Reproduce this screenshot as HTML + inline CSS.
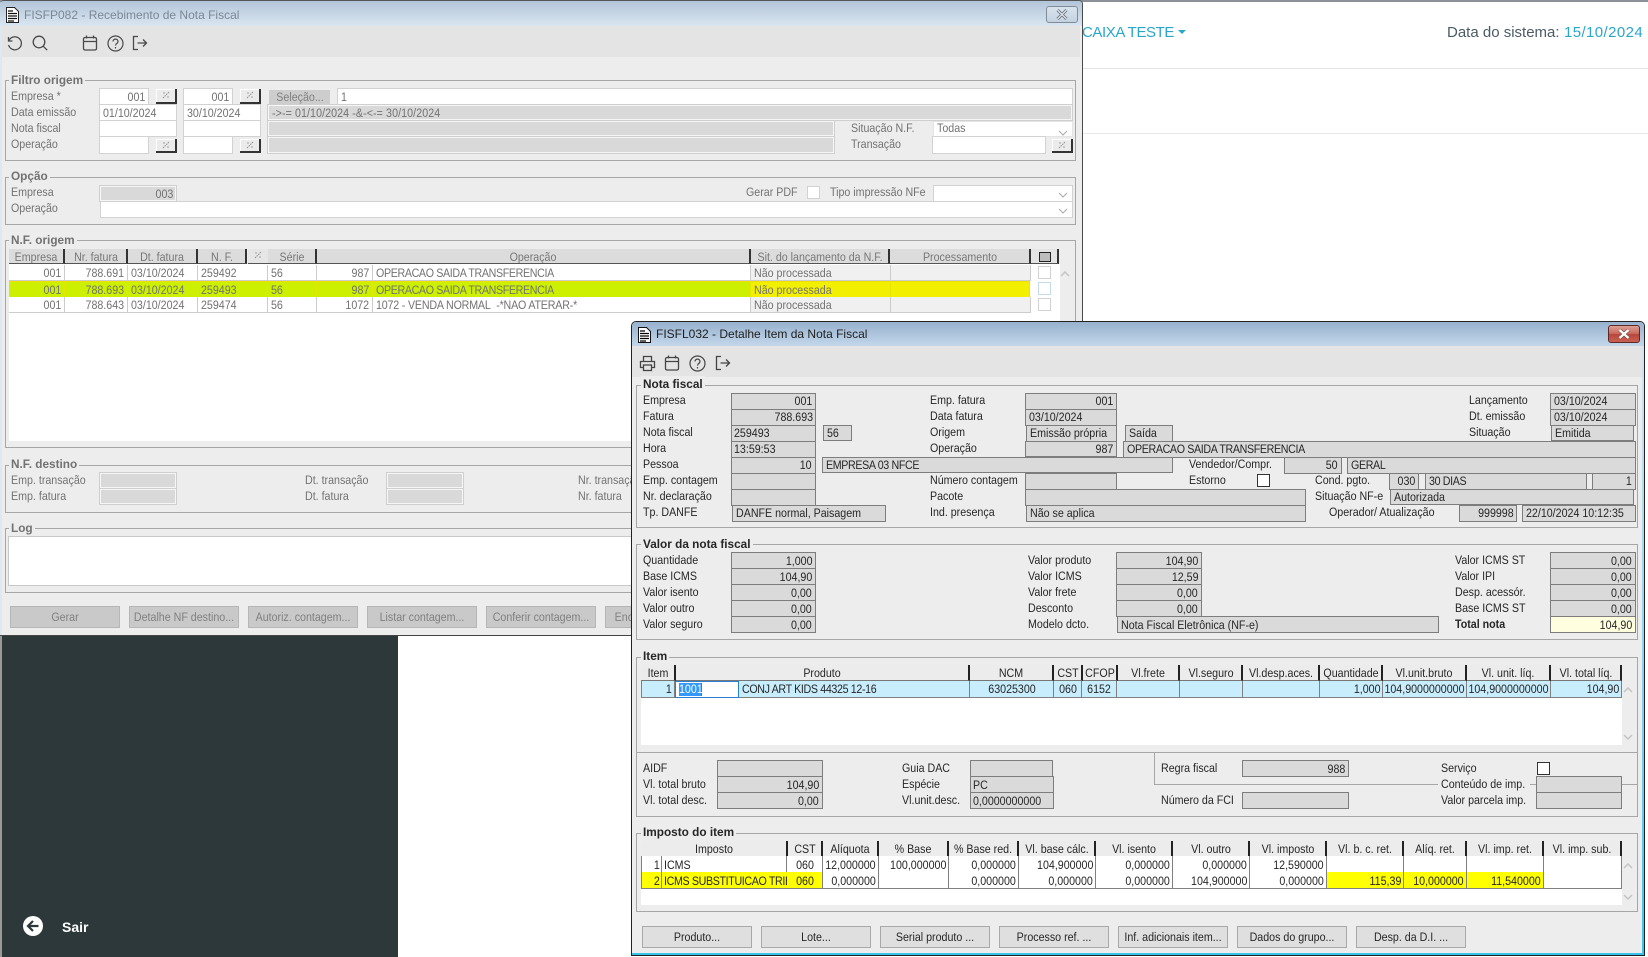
<!DOCTYPE html>
<html lang="pt"><head><meta charset="utf-8"><title>FISFP082</title>
<style>
html,body{margin:0;padding:0;width:1648px;height:957px;overflow:hidden;background:#fff;font-family:"Liberation Sans",sans-serif}
div,svg{position:absolute;box-sizing:border-box}
.t{height:16px;line-height:16px;white-space:nowrap;font-size:12.2px;transform:scaleX(.875);transform-origin:0 0}
.f{white-space:nowrap;overflow:hidden;font-size:12.2px;line-height:15px;padding:0 3px}
.f span{display:inline-block;transform:scaleX(.875);transform-origin:0 0}
.r{text-align:right}.r span{float:right;display:block;transform-origin:100% 0}
.c{text-align:center}.c span{position:absolute;left:50%;top:0;transform:translateX(-50%) scaleX(.875);transform-origin:50% 0}
.u span{letter-spacing:-.4px}
.w1{color:#727272}.w2{color:#262626}
.b{font-weight:bold;font-size:11.8px;height:16px;line-height:16px;padding:0 2px;white-space:nowrap;background:#ededed}
.gb{border:1px solid #a6a6a6}
.i{background:#fff;border:1px solid #d2d2d2;line-height:16px}
.g{background:#d9d9d9;border:1px solid #cfcfcf;box-shadow:inset 0 0 0 1px #f6f6f6;line-height:16px}
.lk{background:#ebebeb;border-right:2px solid #333;border-bottom:2px solid #333;width:21px;height:15px;box-shadow:inset 1px 1px 0 #fff}
.h1{background:#dcdcdc;border-right:2px solid #333;border-bottom:1px solid #555;height:15px;color:#777;line-height:17px}
.k1{background:#fff;border-right:1px solid #ccc;border-bottom:1px solid #ccc;height:16px;line-height:17px}
.y1{background:#ccf000;border-right:1px solid #e6e600;border-top:1px solid #eee000;border-bottom:1px solid #eee000;height:17px;line-height:16px}
.d{background:#dadada;border:1px solid #7d7d7d;height:17px}
.v{line-height:16px}
.h2{background:#ececec;border-right:2px solid #222;border-bottom:1px solid #777;height:16px;line-height:16px}
.k2{background:#fff;border-right:1px solid #808080;border-bottom:1px solid #808080;height:17px;line-height:17px}
.s{background:#c8edfc}
.y{background:#ff0}
.q{line-height:18px}
.bt1{background:#c9c9c9;border:1px solid #b6b6b6;height:22px;color:#808080;line-height:20px}
.bt2{background:#dfdfdf;border:1px solid #a9a9a9;height:22px;top:926px;width:110px;line-height:20px}
</style></head><body>

<!-- background page -->
<div style="left:0;top:0;width:1648px;height:2px;background:#8b9099"></div>
<div style="left:1082px;top:68px;width:566px;height:1px;background:#e3e3e3"></div>
<div style="left:1082px;top:133px;width:566px;height:1px;background:#e8e8e8"></div>
<div style="left:1082px;top:23px;height:20px;line-height:20px;font-size:15px;letter-spacing:-.4px;color:#2ba6cb;white-space:nowrap">CAIXA TESTE</div>
<div style="left:1178px;top:30px;width:0;height:0;border-left:4px solid transparent;border-right:4px solid transparent;border-top:4px solid #2ba6cb"></div>
<div style="left:1447px;top:23px;height:20px;line-height:20px;font-size:15px;color:#4b5b66;white-space:nowrap">Data do sistema:</div>
<div style="left:1564px;top:23px;height:20px;line-height:20px;font-size:15px;letter-spacing:.4px;color:#2ba6cb;white-space:nowrap">15/10/2024</div>
<div style="left:0;top:636px;width:398px;height:321px;background:#2d383b;border-left:2px solid #9a9a9a"></div>
<svg style="left:22px;top:915px" width="22" height="22" viewBox="0 0 22 22"><circle cx="11" cy="11" r="10" fill="#fff"/><path d="M16.5 11H6.5M11 6l-5 5 5 5" fill="none" stroke="#2d383b" stroke-width="2.2"/></svg>
<div style="left:62px;top:917px;height:20px;line-height:20px;color:#fff;font-weight:bold;font-size:14px">Sair</div>

<!-- WINDOW 1 -->
<div class="w1" style="left:0;top:0;width:1083px;height:636px;overflow:hidden;background:#ededed;border-right:1px solid #4a4a4a;border-bottom:1px solid #444;border-top:1px solid #555;border-radius:4px 4px 0 0">
<div style="left:0;top:0;width:2px;height:636px;background:#dfe8f2"></div>
<div style="left:0;top:0;width:1082px;height:25px;background:linear-gradient(#b2c5d8,#dae6f1)"></div>
<div style="left:2px;top:25px;width:1078px;height:31px;background:#e4e4e4"></div>
<svg style="left:6px;top:6px" width="13" height="16" viewBox="0 0 13 16"><path d="M.5.5h8l4 4v11H.5z" fill="#fff" stroke="#222"/><path d="M2 4h5M2 6.5h9M2 9h9M2 11.500h9M2 14h6" stroke="#111" stroke-width="1.200"/></svg>
<div style="left:24px;top:6px;height:16px;line-height:16px;font-size:12px;color:#7b8894;white-space:nowrap">FISFP082 - Recebimento de Nota Fiscal</div>
<div style="left:1046px;top:5px;width:32px;height:17px;border:1px solid #7f8b99;border-radius:3px;background:linear-gradient(#d9e3ed,#c4d2e0)"></div>
<svg style="left:1056px;top:8px" width="12" height="11" viewBox="0 0 12 11"><path d="M1.500 1l9 9M10.500 1l-9 9" stroke="#5a6570" stroke-width="2.800"/><path d="M1.500 1l9 9M10.500 1l-9 9" stroke="#dfe6ee" stroke-width="1.300"/></svg>
<svg style="left:7px;top:34px" width="16" height="16" viewBox="0 0 16 16" fill="none" stroke="#4a4a4a" stroke-width="1.300"><path d="M1.500 2v4h4M1.800 6A6.500 6.500 0 1 1 1.600 10"/></svg>
<svg style="left:32px;top:34px" width="16" height="16" viewBox="0 0 16 16" fill="none" stroke="#4a4a4a" stroke-width="1.300"><circle cx="7" cy="7" r="5.800"/><path d="M11.200 11.200l4 4"/></svg>
<svg style="left:82px;top:34px" width="16" height="16" viewBox="0 0 16 16" fill="none" stroke="#4a4a4a" stroke-width="1.300"><rect x="1.500" y="2.500" width="13" height="12.500" rx="1.500"/><path d="M1.500 6.500h13M4.500 .5v3M11.500 .5v3"/></svg>
<svg style="left:107px;top:34px" width="17" height="17" viewBox="0 0 17 17" fill="none" stroke="#4a4a4a" stroke-width="1.200"><circle cx="8.500" cy="8.500" r="7.500"/><path d="M6 6.500c0-3.200 5-3.200 5 0 0 2-2.500 2-2.500 4M8.500 12v1.500"/></svg>
<svg style="left:132px;top:34px" width="16" height="16" viewBox="0 0 16 16" fill="none" stroke="#4a4a4a" stroke-width="1.300"><path d="M6 1.500H1.500v13H6M5.500 8h9M11 4.500L14.500 8 11 11.500"/></svg>

<!-- Filtro origem -->
<div class="gb" style="left:5px;top:79px;width:1071px;height:81px"></div>
<div class="b" style="left:9px;top:71px">Filtro origem</div>
<div class="t" style="left:11px;top:87px">Empresa *</div>
<div class="t" style="left:11px;top:103px">Data emissão</div>
<div class="t" style="left:11px;top:119px">Nota fiscal</div>
<div class="t" style="left:11px;top:135px">Operação</div>
<div class="f i r" style="left:99px;top:87px;width:50px;height:17px"><span>001</span></div>
<div class="lk" style="left:156px;top:88px"><svg style="left:5px;top:1px" width="10" height="10" viewBox="0 0 10 10"><path d="M2 8L8 2" stroke="#8c8c8c" stroke-dasharray="1.500 .8"/><path d="M2 3h2M6 7h2" stroke="#a0a0a0"/></svg></div>
<div class="f i r" style="left:183px;top:87px;width:50px;height:17px"><span>001</span></div>
<div class="lk" style="left:240px;top:88px"><svg style="left:5px;top:1px" width="10" height="10" viewBox="0 0 10 10"><path d="M2 8L8 2" stroke="#8c8c8c" stroke-dasharray="1.500 .8"/><path d="M2 3h2M6 7h2" stroke="#a0a0a0"/></svg></div>
<div class="f c" style="left:269px;top:89px;width:61px;height:15px;background:#cdcdcd;color:#808080;line-height:15px"><span>Seleção...</span></div>
<div class="f i" style="left:337px;top:87px;width:736px;height:17px"><span>1</span></div>
<div class="f i" style="left:99px;top:103px;width:78px;height:17px"><span>01/10/2024</span></div>
<div class="f i" style="left:183px;top:103px;width:78px;height:17px"><span>30/10/2024</span></div>
<div class="f g u" style="left:267px;top:103px;width:806px;height:17px;padding-left:4px"><span style="letter-spacing:.1px">-&gt;-= 01/10/2024 -&amp;-&lt;-= 30/10/2024</span></div>
<div class="f i" style="left:99px;top:119px;width:78px;height:17px"></div>
<div class="f i" style="left:183px;top:119px;width:78px;height:17px"></div>
<div class="f g" style="left:267px;top:119px;width:568px;height:17px"></div>
<div class="f i" style="left:99px;top:135px;width:50px;height:18px"></div>
<div class="lk" style="left:156px;top:138px;height:14px"><svg style="left:5px;top:1px" width="10" height="10" viewBox="0 0 10 10"><path d="M2 8L8 2" stroke="#8c8c8c" stroke-dasharray="1.500 .8"/><path d="M2 3h2M6 7h2" stroke="#a0a0a0"/></svg></div>
<div class="f i" style="left:183px;top:135px;width:50px;height:18px"></div>
<div class="lk" style="left:240px;top:138px;height:14px"><svg style="left:5px;top:1px" width="10" height="10" viewBox="0 0 10 10"><path d="M2 8L8 2" stroke="#8c8c8c" stroke-dasharray="1.500 .8"/><path d="M2 3h2M6 7h2" stroke="#a0a0a0"/></svg></div>
<div class="f g" style="left:267px;top:135px;width:568px;height:18px"></div>
<div class="t" style="left:851px;top:119px">Situação N.F.</div>
<div class="t" style="left:851px;top:135px">Transação</div>
<div class="f i" style="left:933px;top:120px;width:140px;height:16px;border-color:#e4e4e4;line-height:13px"><span>Todas</span></div>
<svg style="left:1058px;top:129px" width="10" height="6" viewBox="0 0 10 6"><path d="M1 1l4 4 4-4" fill="none" stroke="#aaa"/></svg>
<div class="f i" style="left:932px;top:135px;width:114px;height:18px"></div>
<div class="lk" style="left:1052px;top:138px;height:14px"><svg style="left:5px;top:1px" width="10" height="10" viewBox="0 0 10 10"><path d="M2 8L8 2" stroke="#8c8c8c" stroke-dasharray="1.500 .8"/><path d="M2 3h2M6 7h2" stroke="#a0a0a0"/></svg></div>

<!-- Opção -->
<div class="gb" style="left:5px;top:176px;width:1071px;height:48px"></div>
<div class="b" style="left:9px;top:167px">Opção</div>
<div class="t" style="left:11px;top:183px">Empresa</div>
<div class="t" style="left:11px;top:199px">Operação</div>
<div class="f g r" style="left:99px;top:184px;width:78px;height:17px"><span>003</span></div>
<div class="f i" style="left:100px;top:200px;width:973px;height:17px"></div>
<svg style="left:1058px;top:207px" width="10" height="6" viewBox="0 0 10 6"><path d="M1 1l4 4 4-4" fill="none" stroke="#aaa"/></svg>
<div class="t" style="left:746px;top:183px">Gerar PDF</div>
<div class="i" style="left:807px;top:185px;width:13px;height:13px"></div>
<div class="t" style="left:830px;top:183px">Tipo impressão NFe</div>
<div class="f i" style="left:933px;top:184px;width:140px;height:17px"></div>
<svg style="left:1058px;top:191px" width="10" height="6" viewBox="0 0 10 6"><path d="M1 1l4 4 4-4" fill="none" stroke="#aaa"/></svg>

<!-- N.F. origem -->
<div class="gb" style="left:5px;top:239px;width:1071px;height:208px"></div>
<div class="b" style="left:9px;top:231px">N.F. origem</div>
<div style="left:9px;top:263px;width:1051px;height:177px;background:#fff"></div>
<div class="f c h1" style="left:9px;top:248px;width:56px"><span>Empresa</span></div>
<div class="f c h1" style="left:65px;top:248px;width:63px"><span>Nr. fatura</span></div>
<div class="f c h1" style="left:128px;top:248px;width:70px"><span>Dt. fatura</span></div>
<div class="f c h1" style="left:198px;top:248px;width:49px"><span>N. F.</span></div>
<div class="h1" style="left:248px;top:248px;width:20px;background:#e6e6e6;border-right:0"><svg style="left:5px;top:1px" width="10" height="10" viewBox="0 0 10 10"><path d="M2 8L8 2" stroke="#8c8c8c" stroke-dasharray="1.500 .8"/><path d="M2 3h2M6 7h2" stroke="#a0a0a0"/></svg></div>
<div class="f c h1" style="left:268px;top:248px;width:49px"><span>Série</span></div>
<div class="f c h1" style="left:317px;top:248px;width:434px"><span>Operação</span></div>
<div class="f c h1" style="left:751px;top:248px;width:139px"><span>Sit. do lançamento da N.F.</span></div>
<div class="f c h1" style="left:890px;top:248px;width:141px"><span>Processamento</span></div>
<div class="h1" style="left:1031px;top:248px;width:28px;background:#e4e4e4;border-right:2px solid #333"></div>
<div style="left:1039px;top:251px;width:12px;height:10px;border:1px solid #222;background:#bdbdbd"></div>

<div class="f k1 r" style="left:9px;top:264px;width:56px"><span>001</span></div><div class="f k1 r" style="left:65px;top:264px;width:63px"><span>788.691</span></div><div class="f k1" style="left:128px;top:264px;width:70px"><span>03/10/2024</span></div><div class="f k1" style="left:198px;top:264px;width:70px"><span>259492</span></div><div class="f k1" style="left:268px;top:264px;width:49px"><span>56</span></div><div class="f k1 r" style="left:317px;top:264px;width:56px"><span>987</span></div><div class="f k1 u" style="left:373px;top:264px;width:378px"><span>OPERACAO SAIDA TRANSFERENCIA</span></div><div class="f k1" style="left:751px;top:264px;width:140px;background:#f0f0f0"><span>Não processada</span></div><div class="f k1" style="left:891px;top:264px;width:140px;background:#f0f0f0"></div>

<div class="f y1 r" style="left:9px;top:280px;width:56px"><span>001</span></div><div class="f y1 r" style="left:65px;top:280px;width:63px"><span>788.693</span></div><div class="f y1" style="left:128px;top:280px;width:70px"><span>03/10/2024</span></div><div class="f y1" style="left:198px;top:280px;width:70px"><span>259493</span></div><div class="f y1" style="left:268px;top:280px;width:49px"><span>56</span></div><div class="f y1 r" style="left:317px;top:280px;width:56px"><span>987</span></div><div class="f y1 u" style="left:373px;top:280px;width:378px"><span>OPERACAO SAIDA TRANSFERENCIA</span></div><div class="f y1" style="left:751px;top:280px;width:140px;background:#f2f000"><span>Não processada</span></div><div class="f y1" style="left:891px;top:280px;width:139px;background:#f2f000"></div>

<div class="f k1 r" style="left:9px;top:296px;width:56px"><span>001</span></div><div class="f k1 r" style="left:65px;top:296px;width:63px"><span>788.643</span></div><div class="f k1" style="left:128px;top:296px;width:70px"><span>03/10/2024</span></div><div class="f k1" style="left:198px;top:296px;width:70px"><span>259474</span></div><div class="f k1" style="left:268px;top:296px;width:49px"><span>56</span></div><div class="f k1 r" style="left:317px;top:296px;width:56px"><span>1072</span></div><div class="f k1 u" style="left:373px;top:296px;width:378px"><span style="letter-spacing:-.2px">1072 - VENDA NORMAL&nbsp; -*NAO ATERAR-*</span></div><div class="f k1" style="left:751px;top:296px;width:140px;background:#f0f0f0"><span>Não processada</span></div><div class="f k1" style="left:891px;top:296px;width:140px;background:#f0f0f0"></div>

<div class="i" style="left:1038px;top:265px;width:13px;height:13px"></div>
<div class="i" style="left:1038px;top:281px;width:13px;height:13px;border-color:#c5dbe8"></div>
<div class="i" style="left:1038px;top:297px;width:13px;height:13px"></div>
<svg style="left:1060px;top:270px" width="10" height="6" viewBox="0 0 10 6"><path d="M1 5l4-4 4 4" fill="none" stroke="#c4c4c4" stroke-width="1.500"/></svg>

<!-- N.F. destino -->
<div class="gb" style="left:5px;top:464px;width:1071px;height:48px"></div>
<div class="b" style="left:9px;top:455px">N.F. destino</div>
<div class="t" style="left:11px;top:471px">Emp. transação</div>
<div class="t" style="left:11px;top:487px">Emp. fatura</div>
<div class="g" style="left:99px;top:471px;width:78px;height:17px"></div>
<div class="g" style="left:99px;top:487px;width:78px;height:17px"></div>
<div class="t" style="left:305px;top:471px">Dt. transação</div>
<div class="t" style="left:305px;top:487px">Dt. fatura</div>
<div class="g" style="left:386px;top:471px;width:78px;height:17px"></div>
<div class="g" style="left:386px;top:487px;width:78px;height:17px"></div>
<div class="t" style="left:578px;top:471px">Nr. transação</div>
<div class="t" style="left:578px;top:487px">Nr. fatura</div>

<!-- Log -->
<div class="gb" style="left:5px;top:527px;width:1071px;height:65px"></div>
<div class="b" style="left:9px;top:519px">Log</div>
<div class="i" style="left:8px;top:535px;width:1060px;height:50px;border-color:#c8c8c8"></div>

<div class="f c bt1" style="left:10px;top:605px;width:110px"><span>Gerar</span></div>
<div class="f c bt1" style="left:129px;top:605px;width:110px"><span>Detalhe NF destino...</span></div>
<div class="f c bt1" style="left:248px;top:605px;width:110px"><span>Autoriz. contagem...</span></div>
<div class="f c bt1" style="left:367px;top:605px;width:110px"><span>Listar contagem...</span></div>
<div class="f c bt1" style="left:486px;top:605px;width:110px"><span>Conferir contagem...</span></div>
<div class="f c bt1" style="left:605px;top:605px;width:110px"><span>Encerrar contagem</span></div>
</div>

<!-- WINDOW 2 -->
<div style="left:631px;top:321px;width:1014px;height:635px;background:#ededed;border:1px solid #222;border-radius:5px 5px 0 0"></div>
<div style="left:632px;top:322px;width:1012px;height:24px;background:linear-gradient(#97b1ce,#c3d7ea);border-radius:4px 4px 0 0"></div>
<div style="left:632px;top:346px;width:1010px;height:31px;background:#e4e4e4"></div>
<div style="left:1642px;top:346px;width:2px;height:609px;background:linear-gradient(#d6e4f1,#7fd0ee 60%,#3ac3ea)"></div>
<div style="left:632px;top:953px;width:1012px;height:2px;background:#3ac3ea"></div>

<div class="w2" style="left:0;top:0;width:1648px;height:957px">
<svg style="left:638px;top:327px" width="13" height="16" viewBox="0 0 13 16"><path d="M.5.5h8l4 4v11H.5z" fill="#fff" stroke="#111"/><path d="M2 4h5M2 6.500h9M2 9h9M2 11.500h9M2 14h6" stroke="#000" stroke-width="1.200"/></svg>
<div style="left:656px;top:326px;height:16px;line-height:16px;font-size:12px;color:#1e1e1e;white-space:nowrap">FISFL032 - Detalhe Item da Nota Fiscal</div>
<div style="left:1608px;top:325px;width:32px;height:18px;border:1px solid #5b2a2a;border-radius:3px;background:linear-gradient(#dd9f93,#c9695b 48%,#b8473c 52%,#c9604f)"></div>
<svg style="left:1617px;top:328px" width="14" height="12" viewBox="0 0 14 12"><path d="M2.500 2l9 8M11.500 2l-9 8" stroke="#6a5050" stroke-width="3.400"/><path d="M2.500 2l9 8M11.500 2l-9 8" stroke="#fff" stroke-width="2.200"/></svg>
<svg style="left:639px;top:355px" width="17" height="17" viewBox="0 0 17 17" fill="none" stroke="#444" stroke-width="1.300"><path d="M4.500 6V1.500h8V6M4.500 12.500H1.500V6.500h14v6h-3"/><rect x="4.500" y="10" width="8" height="5.500"/></svg>
<svg style="left:664px;top:355px" width="16" height="16" viewBox="0 0 16 16" fill="none" stroke="#444" stroke-width="1.300"><rect x="1.500" y="2.500" width="13" height="12.500" rx="1.500"/><path d="M1.500 6.500h13M4.500 .5v3M11.500 .5v3"/></svg>
<svg style="left:689px;top:355px" width="17" height="17" viewBox="0 0 17 17" fill="none" stroke="#444" stroke-width="1.200"><circle cx="8.500" cy="8.500" r="7.500"/><path d="M6 6.500c0-3.200 5-3.200 5 0 0 2-2.500 2-2.500 4M8.500 12v1.500"/></svg>
<svg style="left:715px;top:355px" width="16" height="16" viewBox="0 0 16 16" fill="none" stroke="#444" stroke-width="1.300"><path d="M6 1.500H1.500v13H6M5.500 8h9M11 4.500L14.500 8 11 11.500"/></svg>

<!-- Nota fiscal -->
<div class="gb" style="left:636px;top:385px;width:1002px;height:143px"></div>
<div class="b" style="left:641px;top:376px">Nota fiscal</div>
<div class="t" style="left:643px;top:392px">Empresa</div>
<div class="t" style="left:643px;top:408px">Fatura</div>
<div class="t" style="left:643px;top:424px">Nota fiscal</div>
<div class="t" style="left:643px;top:440px">Hora</div>
<div class="t" style="left:643px;top:456px">Pessoa</div>
<div class="t" style="left:643px;top:472px">Emp. contagem</div>
<div class="t" style="left:643px;top:488px">Nr. declaração</div>
<div class="t" style="left:643px;top:504px">Tp. DANFE</div>
<div class="f d r" style="left:731px;top:393px;width:85px"><span>001</span></div>
<div class="f d r" style="left:731px;top:409px;width:85px;padding-right:2px"><span>788.693</span></div>
<div class="f d" style="left:731px;top:425px;width:85px;padding-left:2px"><span>259493</span></div>
<div class="f d" style="left:731px;top:441px;width:85px;padding-left:2px"><span>13:59:53</span></div>
<div class="f d r" style="left:731px;top:457px;width:85px"><span>10</span></div>
<div class="f d" style="left:731px;top:473px;width:85px"></div>
<div class="f d" style="left:731px;top:489px;width:85px"></div>
<div class="f d" style="left:732px;top:505px;width:154px"><span>DANFE normal, Paisagem</span></div>
<div class="f d" style="left:823px;top:425px;width:29px;height:16px"><span>56</span></div>
<div class="f d u" style="left:822px;top:457px;width:351px;height:16px"><span>EMPRESA 03 NFCE</span></div>
<div class="t" style="left:930px;top:392px">Emp. fatura</div>
<div class="t" style="left:930px;top:408px">Data fatura</div>
<div class="t" style="left:930px;top:424px">Origem</div>
<div class="t" style="left:930px;top:440px">Operação</div>
<div class="t" style="left:930px;top:472px">Número contagem</div>
<div class="t" style="left:930px;top:488px">Pacote</div>
<div class="t" style="left:930px;top:504px">Ind. presença</div>
<div class="f d r" style="left:1025px;top:393px;width:92px"><span>001</span></div>
<div class="f d" style="left:1025px;top:409px;width:92px"><span>03/10/2024</span></div>
<div class="f d" style="left:1026px;top:425px;width:91px"><span>Emissão própria</span></div>
<div class="f d" style="left:1125px;top:425px;width:48px"><span>Saída</span></div>
<div class="f d r" style="left:1025px;top:441px;width:92px;height:16px"><span>987</span></div>
<div class="f d u" style="left:1123px;top:441px;width:513px"><span>OPERACAO SAIDA TRANSFERENCIA</span></div>
<div class="f d" style="left:1025px;top:473px;width:92px"></div>
<div class="f d" style="left:1025px;top:489px;width:281px"></div>
<div class="f d" style="left:1026px;top:505px;width:280px"><span>Não se aplica</span></div>
<div class="t" style="left:1189px;top:456px">Vendedor/Compr.</div>
<div class="t" style="left:1189px;top:472px">Estorno</div>
<div style="left:1257px;top:474px;width:13px;height:13px;background:#fff;border:1px solid #333"></div>
<div class="f d r" style="left:1284px;top:457px;width:58px"><span>50</span></div>
<div class="f d u" style="left:1347px;top:457px;width:289px"><span>GERAL</span></div>
<div class="t" style="left:1315px;top:472px">Cond. pgto.</div>
<div class="t" style="left:1315px;top:488px">Situação NF-e</div>
<div class="t" style="left:1329px;top:504px">Operador/ Atualização</div>
<div class="f d r" style="left:1389px;top:473px;width:30px"><span>030</span></div>
<div class="f d u" style="left:1425px;top:473px;width:162px"><span>30 DIAS</span></div>
<div class="f d r" style="left:1592px;top:473px;width:44px"><span>1</span></div>
<div class="f d" style="left:1390px;top:489px;width:244px;height:16px"><span>Autorizada</span></div>
<div class="f d r" style="left:1459px;top:505px;width:58px;padding-right:2px"><span>999998</span></div>
<div class="f d" style="left:1522px;top:505px;width:114px"><span>22/10/2024 10:12:35</span></div>
<div class="t" style="left:1469px;top:392px">Lançamento</div>
<div class="t" style="left:1469px;top:408px">Dt. emissão</div>
<div class="t" style="left:1469px;top:424px">Situação</div>
<div class="f d" style="left:1550px;top:393px;width:86px"><span>03/10/2024</span></div>
<div class="f d" style="left:1550px;top:409px;width:86px"><span>03/10/2024</span></div>
<div class="f d" style="left:1551px;top:425px;width:83px;height:16px"><span>Emitida</span></div>

<!-- Valor da nota fiscal -->
<div class="gb" style="left:636px;top:544px;width:1002px;height:96px"></div>
<div class="b" style="left:641px;top:536px">Valor da nota fiscal</div>
<div class="t" style="left:643px;top:552px">Quantidade</div>
<div class="t" style="left:643px;top:568px">Base ICMS</div>
<div class="t" style="left:643px;top:584px">Valor isento</div>
<div class="t" style="left:643px;top:600px">Valor outro</div>
<div class="t" style="left:643px;top:616px">Valor seguro</div>
<div class="f d v r" style="left:731px;top:552px;width:85px"><span>1,000</span></div>
<div class="f d v r" style="left:731px;top:568px;width:85px"><span>104,90</span></div>
<div class="f d v r" style="left:731px;top:584px;width:85px"><span>0,00</span></div>
<div class="f d v r" style="left:731px;top:600px;width:85px"><span>0,00</span></div>
<div class="f d v r" style="left:731px;top:616px;width:85px"><span>0,00</span></div>
<div class="t" style="left:1028px;top:552px">Valor produto</div>
<div class="t" style="left:1028px;top:568px">Valor ICMS</div>
<div class="t" style="left:1028px;top:584px">Valor frete</div>
<div class="t" style="left:1028px;top:600px">Desconto</div>
<div class="t" style="left:1028px;top:616px">Modelo dcto.</div>
<div class="f d v r" style="left:1116px;top:552px;width:86px"><span>104,90</span></div>
<div class="f d v r" style="left:1116px;top:568px;width:86px"><span>12,59</span></div>
<div class="f d v r" style="left:1116px;top:584px;width:86px"><span>0,00</span></div>
<div class="f d v r" style="left:1116px;top:600px;width:86px"><span>0,00</span></div>
<div class="f d v" style="left:1117px;top:616px;width:322px"><span>Nota Fiscal Eletrônica (NF-e)</span></div>
<div class="t" style="left:1455px;top:552px">Valor ICMS ST</div>
<div class="t" style="left:1455px;top:568px">Valor IPI</div>
<div class="t" style="left:1455px;top:584px">Desp. acessór.</div>
<div class="t" style="left:1455px;top:600px">Base ICMS ST</div>
<div class="t" style="left:1455px;top:616px;font-weight:bold">Total nota</div>
<div class="f d v r" style="left:1550px;top:552px;width:86px"><span>0,00</span></div>
<div class="f d v r" style="left:1550px;top:568px;width:86px"><span>0,00</span></div>
<div class="f d v r" style="left:1550px;top:584px;width:86px"><span>0,00</span></div>
<div class="f d v r" style="left:1550px;top:600px;width:86px"><span>0,00</span></div>
<div class="f d v r" style="left:1550px;top:616px;width:86px;background:#ffffe0"><span>104,90</span></div>

<!-- Item -->
<div class="gb" style="left:636px;top:657px;width:1002px;height:96px"></div>
<div class="b" style="left:641px;top:648px">Item</div>
<div style="left:641px;top:681px;width:981px;height:64px;background:#fff"></div>
<div class="f c h2" style="left:641px;top:665px;width:35px"><span>Item</span></div>
<div class="f c h2" style="left:676px;top:665px;width:294px"><span>Produto</span></div>
<div class="f c h2" style="left:970px;top:665px;width:84px"><span>NCM</span></div>
<div class="f c h2" style="left:1054px;top:665px;width:29px"><span>CST</span></div>
<div class="f c h2" style="left:1083px;top:665px;width:35px"><span>CFOP</span></div>
<div class="f c h2" style="left:1118px;top:665px;width:62px"><span>Vl.frete</span></div>
<div class="f c h2" style="left:1180px;top:665px;width:63px"><span>Vl.seguro</span></div>
<div class="f c h2" style="left:1243px;top:665px;width:77px"><span>Vl.desp.aces.</span></div>
<div class="f c h2" style="left:1320px;top:665px;width:63px"><span>Quantidade</span></div>
<div class="f c h2" style="left:1383px;top:665px;width:84px"><span>Vl.unit.bruto</span></div>
<div class="f c h2" style="left:1467px;top:665px;width:84px"><span>Vl. unit. líq.</span></div>
<div class="f c h2" style="left:1551px;top:665px;width:71px"><span>Vl. total líq.</span></div>

<div class="f k2 s r" style="left:641px;top:681px;width:34px;border-left:1px solid #808080;padding-right:2px"><span>1</span></div>
<div class="f k2" style="left:675px;top:681px;width:64px;border:1px solid #2a7fd0;height:17px"></div>
<div style="left:679px;top:683px;width:23px;height:13px;background:#3399ff;border-right:1px solid #c05a10"></div>
<div style="left:679px;top:682px;height:15px;line-height:15px;font-size:12.200px;color:#fff;transform:scaleX(.875);transform-origin:0 0">1001</div>
<div class="f k2 s u" style="left:739px;top:681px;width:231px"><span>CONJ ART KIDS 44325 12-16</span></div>
<div class="f k2 s c" style="left:970px;top:681px;width:84px"><span>63025300</span></div>
<div class="f k2 s c" style="left:1054px;top:681px;width:28px"><span>060</span></div>
<div class="f k2 s c" style="left:1082px;top:681px;width:35px"><span>6152</span></div>
<div class="f k2 s" style="left:1117px;top:681px;width:63px"></div>
<div class="f k2 s" style="left:1180px;top:681px;width:63px"></div>
<div class="f k2 s" style="left:1243px;top:681px;width:77px"></div>
<div class="f k2 s r" style="left:1320px;top:681px;width:63px;padding-right:2px"><span>1,000</span></div>
<div class="f k2 s r" style="left:1383px;top:681px;width:84px;padding:0 1px"><span>104,9000000000</span></div>
<div class="f k2 s r" style="left:1467px;top:681px;width:84px;padding:0 1px"><span>104,9000000000</span></div>
<div class="f k2 s r" style="left:1551px;top:681px;width:71px;padding-right:2px"><span>104,90</span></div>
<svg style="left:1623px;top:687px" width="10" height="6" viewBox="0 0 10 6"><path d="M1 5l4-4 4 4" fill="none" stroke="#c4c4c4" stroke-width="1.500"/></svg>
<svg style="left:1623px;top:734px" width="10" height="6" viewBox="0 0 10 6"><path d="M1 1l4 4 4-4" fill="none" stroke="#c4c4c4" stroke-width="1.500"/></svg>

<!-- Lower section -->
<div class="gb" style="left:636px;top:752px;width:1002px;height:65px"></div>
<div class="t" style="left:643px;top:760px">AIDF</div>
<div class="t" style="left:643px;top:776px">Vl. total bruto</div>
<div class="t" style="left:643px;top:792px">Vl. total desc.</div>
<div class="f d" style="left:717px;top:760px;width:106px"></div>
<div class="f d v r" style="left:717px;top:776px;width:106px"><span>104,90</span></div>
<div class="f d v r" style="left:717px;top:792px;width:106px"><span>0,00</span></div>
<div class="t" style="left:902px;top:760px">Guia DAC</div>
<div class="t" style="left:902px;top:776px">Espécie</div>
<div class="t" style="left:902px;top:792px">Vl.unit.desc.</div>
<div class="f d" style="left:970px;top:760px;width:83px"></div>
<div class="f d v" style="left:970px;top:776px;width:84px;padding-left:2px"><span>PC</span></div>
<div class="f d v" style="left:970px;top:792px;width:84px;padding-left:2px"><span>0,0000000000</span></div>
<div style="left:1154px;top:752px;width:484px;height:33px;border-left:1px solid #a6a6a6;border-bottom:1px solid #a6a6a6"></div>
<div style="left:1438px;top:778px;width:92px;height:12px;background:#ededed"></div>
<div class="t" style="left:1161px;top:760px">Regra fiscal</div>
<div class="t" style="left:1161px;top:792px">Número da FCI</div>
<div class="f d v r" style="left:1242px;top:760px;width:107px;border-width:1px"><span>988</span></div>
<div class="f d" style="left:1242px;top:792px;width:107px"></div>
<div class="t" style="left:1441px;top:760px">Serviço</div>
<div class="t" style="left:1441px;top:776px">Conteúdo de imp.</div>
<div class="t" style="left:1441px;top:792px">Valor parcela imp.</div>
<div style="left:1537px;top:762px;width:13px;height:13px;background:#fff;border:1px solid #333"></div>
<div class="f d" style="left:1536px;top:776px;width:86px"></div>
<div class="f d" style="left:1536px;top:792px;width:86px"></div>

<!-- Imposto do item -->
<div class="gb" style="left:636px;top:833px;width:1002px;height:79px"></div>
<div class="b" style="left:641px;top:824px">Imposto do item</div>
<div style="left:641px;top:856px;width:981px;height:49px;background:#fff"></div>
<div class="f c h2" style="left:641px;top:841px;width:147px"><span>Imposto</span></div>
<div class="f c h2" style="left:788px;top:841px;width:35px"><span>CST</span></div>
<div class="f c h2" style="left:823px;top:841px;width:56px"><span>Alíquota</span></div>
<div class="f c h2" style="left:879px;top:841px;width:70px"><span>% Base</span></div>
<div class="f c h2" style="left:949px;top:841px;width:70px"><span>% Base red.</span></div>
<div class="f c h2" style="left:1019px;top:841px;width:77px"><span>Vl. base cálc.</span></div>
<div class="f c h2" style="left:1096px;top:841px;width:77px"><span>Vl. isento</span></div>
<div class="f c h2" style="left:1173px;top:841px;width:77px"><span>Vl. outro</span></div>
<div class="f c h2" style="left:1250px;top:841px;width:77px"><span>Vl. imposto</span></div>
<div class="f c h2" style="left:1327px;top:841px;width:77px"><span>Vl. b. c. ret.</span></div>
<div class="f c h2" style="left:1404px;top:841px;width:63px"><span>Alíq. ret.</span></div>
<div class="f c h2" style="left:1467px;top:841px;width:77px"><span>Vl. imp. ret.</span></div>
<div class="f c h2" style="left:1544px;top:841px;width:78px"><span>Vl. imp. sub.</span></div>

<div class="f k2 q r" style="left:641px;top:856px;width:21px;border-left:1px solid #808080;padding-right:1px"><span>1</span></div>
<div class="f k2 q" style="left:662px;top:856px;width:125px;padding-left:2px"><span>ICMS</span></div>
<div class="f k2 q c" style="left:787px;top:856px;width:36px"><span>060</span></div>
<div class="f k2 q r" style="left:823px;top:856px;width:56px;padding:0 2px"><span>12,000000</span></div>
<div class="f k2 q r" style="left:879px;top:856px;width:70px;padding:0 2px"><span>100,000000</span></div>
<div class="f k2 q r" style="left:949px;top:856px;width:70px;padding:0 2px"><span>0,000000</span></div>
<div class="f k2 q r" style="left:1019px;top:856px;width:77px;padding:0 2px"><span>104,900000</span></div>
<div class="f k2 q r" style="left:1096px;top:856px;width:77px;padding:0 2px"><span>0,000000</span></div>
<div class="f k2 q r" style="left:1173px;top:856px;width:77px;padding:0 2px"><span>0,000000</span></div>
<div class="f k2 q r" style="left:1250px;top:856px;width:77px;padding:0 2px"><span>12,590000</span></div>
<div class="k2" style="left:1327px;top:856px;width:77px"></div>
<div class="k2" style="left:1404px;top:856px;width:63px"></div>
<div class="k2" style="left:1467px;top:856px;width:77px"></div>
<div class="k2" style="left:1544px;top:856px;width:78px"></div>

<div class="f k2 q y r" style="left:641px;top:872px;width:21px;border-left:1px solid #808080;padding-right:1px"><span>2</span></div>
<div class="f k2 q y u" style="left:662px;top:872px;width:125px;padding-left:2px;border-right:0"><span>ICMS SUBSTITUICAO TRIB</span></div>
<div class="f k2 q y c" style="left:787px;top:872px;width:36px"><span>060</span></div>
<div class="f k2 q r" style="left:823px;top:872px;width:56px;padding:0 2px"><span>0,000000</span></div>
<div class="k2" style="left:879px;top:872px;width:70px"></div>
<div class="f k2 q r" style="left:949px;top:872px;width:70px;padding:0 2px"><span>0,000000</span></div>
<div class="f k2 q r" style="left:1019px;top:872px;width:77px;padding:0 2px"><span>0,000000</span></div>
<div class="f k2 q r" style="left:1096px;top:872px;width:77px;padding:0 2px"><span>0,000000</span></div>
<div class="f k2 q r" style="left:1173px;top:872px;width:77px;padding:0 2px"><span>104,900000</span></div>
<div class="f k2 q r" style="left:1250px;top:872px;width:77px;padding:0 2px"><span>0,000000</span></div>
<div class="f k2 q y r" style="left:1327px;top:872px;width:77px;padding:0 2px"><span>115,39</span></div>
<div class="f k2 q y r" style="left:1404px;top:872px;width:63px;padding:0 2px"><span>10,000000</span></div>
<div class="f k2 q y r" style="left:1467px;top:872px;width:77px;padding:0 2px"><span>11,540000</span></div>
<div class="k2" style="left:1544px;top:872px;width:78px"></div>
<svg style="left:1623px;top:863px" width="10" height="6" viewBox="0 0 10 6"><path d="M1 5l4-4 4 4" fill="none" stroke="#c4c4c4" stroke-width="1.500"/></svg>
<svg style="left:1623px;top:894px" width="10" height="6" viewBox="0 0 10 6"><path d="M1 1l4 4 4-4" fill="none" stroke="#c4c4c4" stroke-width="1.500"/></svg>

<div class="f c bt2" style="left:642px"><span>Produto...</span></div>
<div class="f c bt2" style="left:761px"><span>Lote...</span></div>
<div class="f c bt2" style="left:880px"><span>Serial produto ...</span></div>
<div class="f c bt2" style="left:999px"><span>Processo ref. ...</span></div>
<div class="f c bt2" style="left:1118px"><span>Inf. adicionais item...</span></div>
<div class="f c bt2" style="left:1237px"><span>Dados do grupo...</span></div>
<div class="f c bt2" style="left:1356px"><span>Desp. da D.I. ...</span></div>
</div>
</body></html>
